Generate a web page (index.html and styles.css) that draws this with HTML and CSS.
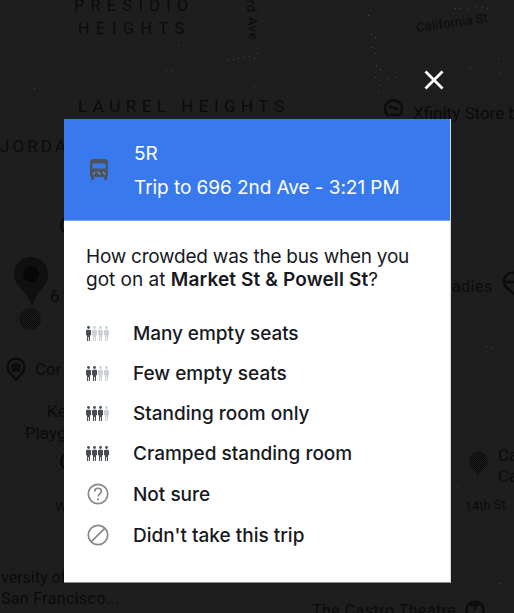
FILE: index.html
```html
<!DOCTYPE html>
<html lang="en">
<head>
<meta charset="utf-8">
<title>Trip feedback</title>
<link rel="stylesheet" href="styles.css">
</head>
<body>
<svg class="map" viewBox="0 0 514 613" aria-hidden="true">
  <defs>
    <pattern id="dots" width="8" height="8" patternUnits="userSpaceOnUse"><path d="M0 1h1v1H0zM4 5h1v1H4z" fill="#0c0c0c"/></pattern>
    <pattern id="dense" width="2" height="2" patternUnits="userSpaceOnUse"><path d="M0 0h1v1H0zM1 1h1v1H1z" fill="#080808"/></pattern>
  </defs>
  <g fill="url(#dots)">
    <path d="M0 385L20 376 62 388 62 410 26 412 0 400zM0 420L30 423 62 440 62 480 0 480z"/>
    <path d="M452 294h52v26l-36 2-6 14h-10zM46 240h18v20H46zM5 310l12 2 3 20-12 5z"/>
    <path d="M400 586h34l-14 14-18-8z"/>
  </g>
  <g class="label">
    <text x="74" y="11" textLength="114" font-size="16">PRESIDIO</text>
    <text x="78" y="34" textLength="106" font-size="16">HEIGHTS</text>
    <text x="78" y="112" textLength="206" font-size="17">LAUREL HEIGHTS</text>
    <text x="0" y="152" textLength="66" font-size="17">JORDA</text>
    <text x="413" y="119" font-size="17">Xfinity Store b</text>
    <text x="50" y="302" font-size="17">6</text>
    <text x="35" y="375" font-size="17">Cor</text>
    <text x="47" y="417" font-size="17">Ke</text>
    <text x="25" y="439" font-size="17">Playg</text>
    <text x="452" y="292" textLength="40" font-size="16">adies</text>
    <text x="498" y="461" font-size="17">Ca</text>
    <text x="498" y="482" font-size="17">Ca</text>
    <text x="465" y="511" font-size="13" transform="rotate(-3 465 511)">14th St</text>
    <text x="1" y="583" font-size="16">versity of</text>
    <text x="1" y="604" textLength="118" font-size="16">San Francisco...</text>
    <text x="312" y="616" textLength="144" font-size="16">The Castro Theatre</text>
    <text x="417" y="32" textLength="72" font-size="13" transform="rotate(-8 417 32)">California St</text>
    <text x="246" y="-8" textLength="48" font-size="13" transform="rotate(86 246 -8)">3rd Ave</text>
    <text x="55" y="511" font-size="13">W</text>
  </g>
  <path d="M32 307C29 292 14 287 14 274a17 17 0 0 1 34 0c0 13-13 18-16 33z" fill="#101010"/>
  <circle cx="31" cy="274" r="8" fill="#070707"/>
  <circle cx="30" cy="319" r="11" fill="url(#dense)"/>
  <g fill="none" stroke="#0c0c0c" stroke-width="2.5">
    <path d="M16 380l-6-7a8.500 8.500 0 1 1 12 0zM11 366h10M12 370h8M13 363v9M16 363v9M19 363v9"/>
    <path d="M389 116a8.500 8.500 0 1 1 9 0M389 108c3-4 7 4 9 0M390 115h8"/>
    <path d="M467 613a8.500 8.500 0 1 1 16 0M471 605h8M475 602v8"/>
    <path d="M514 294l-8-7a8.500 8.500 0 0 1 8-14M504 282h10"/>
    <path d="M64 219a9 9 0 0 0 0 13M64 455a9 9 0 0 0 0 13"/>
  </g>
  <path d="M478 476c-2-6-9-7-9-15a9.500 9.500 0 0 1 19 0c0 8-8 9-10 15z" fill="url(#dense)"/>
  <path d="M178 45h1v1h-1zM166 70h1v1h-1zM171 70h1v1h-1zM34 88h1v1h-1zM228 60h1v1h-1zM233 59h1v1h-1zM238 58h1v1h-1zM244 57h1v1h-1zM249 56h1v1h-1zM254 58h1v1h-1zM257 53h1v1h-1zM254 86h1v1h-1zM368 15h1v1h-1zM371 34h1v1h-1zM375 37h1v1h-1zM372 47h1v1h-1zM375 53h1v1h-1zM376 65h1v1h-1zM380 69h1v1h-1zM375 77h1v1h-1zM387 78h1v1h-1zM395 77h1v1h-1zM379 85h1v1h-1zM378 92h1v1h-1zM455 8h1v1h-1zM460 8h1v1h-1zM467 9h1v1h-1zM476 6h1v1h-1zM482 7h1v1h-1zM487 8h1v1h-1zM470 67h1v1h-1zM498 58h1v1h-1zM500 73h1v1h-1zM486 346h1v1h-1zM491 347h1v1h-1zM457 486h1v1h-1zM500 583h1v1h-1z" fill="#484848"/>
</svg>

<svg width="0" height="0" class="sprite" aria-hidden="true">
  <symbol id="person" viewBox="0 0 5 15">
    <circle cx="2.500" cy="1.500" r="1.400"/>
    <path d="M1.300 3.700h2.400Q5 3.700 5 5v4.200H4V15H2.900v-4h-.8v4H1V9.200H0V5q0-1.300 1.300-1.300z"/>
  </symbol>
</svg>

<main class="dialog">
  <button class="close" aria-label="Close"><svg viewBox="0 0 20 20"><path d="M1.500 1.500l17 17M18.500 1.500l-17 17"/></svg></button>
  <section class="card">
    <header class="trip">
      <svg class="bus" viewBox="0 0 18 21"><path fill-rule="evenodd" d="M3 0h12q3 0 3 3v13q0 1-1 2v2q0 1-1 1h-1q-1 0-1-1v-2H4v2q0 1-1 1H2q-1 0-1-1v-2q-1-1-1-2V3q0-3 3-3zM2.500 4.500v5h13v-5z"/><path class="lamps" d="M3 15.500l2-2.500M15 15.500L13 13M7.500 12.500l3 3"/></svg>
      <div class="trip-text">
        <div class="route">5R</div>
        <div class="destination">Trip to 696 2nd Ave - 3:21 PM</div>
      </div>
    </header>
    <p class="question"><span class="lead">How crowded was the bus when you</span><br>got on at <strong>Market St &amp; Powell St</strong>?</p>
    <ul class="options">
      <li><span class="people one"><svg><use href="#person"/></svg><svg><use href="#person"/></svg><svg><use href="#person"/></svg><svg><use href="#person"/></svg></span><span class="many">Many empty seats</span></li>
      <li><span class="people two"><svg><use href="#person"/></svg><svg><use href="#person"/></svg><svg><use href="#person"/></svg><svg><use href="#person"/></svg></span><span>Few empty seats</span></li>
      <li><span class="people three"><svg><use href="#person"/></svg><svg><use href="#person"/></svg><svg><use href="#person"/></svg><svg><use href="#person"/></svg></span><span>Standing room only</span></li>
      <li><span class="people"><svg><use href="#person"/></svg><svg><use href="#person"/></svg><svg><use href="#person"/></svg><svg><use href="#person"/></svg></span><span>Cramped standing room</span></li>
      <li class="tall"><svg class="round" viewBox="0 0 22 22"><circle cx="11" cy="11" r="9.700"/><path d="M7.700 8.500c0-4.400 6.700-4.200 6.700-.2 0 2.600-3.300 2.700-3.300 5.300M11.100 15.300v2"/></svg><span class="low">Not sure</span></li>
      <li class="tall"><svg class="round" viewBox="0 0 22 22"><circle cx="11" cy="11" r="9.700"/><path d="M4.300 17.700L17.700 4.300"/></svg><span class="low">Didn't take this trip</span></li>
    </ul>
  </section>
</main>
</body>
</html>
```

FILE: styles.css
```css
* { box-sizing: border-box; }
body {
  margin: 0;
  width: 514px;
  height: 613px;
  overflow: hidden;
  background: #1e1e1e;
  color: #17191e;
  font-family: Inter, "Liberation Sans", sans-serif;
}
.map { position: absolute; top: 0; left: 0; width: 514px; height: 613px; }
.sprite { position: absolute; }
.label { fill: #0b0b0b; font-family: Roboto, sans-serif; }
.dialog {
  position: relative;
  width: 387px;
  margin-left: 64px;
  padding-top: 70px;
  display: flex;
  flex-direction: column;
}
.close {
  align-self: flex-end;
  width: 20px;
  height: 20px;
  margin: 0 7px 29px 0;
  padding: 0;
  border: 0;
  background: none;
}
.close svg { display: block; width: 20px; height: 20px; }
.close path { stroke: #fff; stroke-width: 2.700; }
.card { height: 464px; background: #fff; border-right: 1px solid #d9d9d9; border-bottom: 1px solid #858b89; }
.trip {
  display: flex;
  height: 102px;
  padding: 0 0 0 26px;
  background: #387aee;
  border-bottom: 1px solid #78a3ed;
  color: #fff;
}
.bus { width: 18px; height: 21px; margin: 40px 26px 0 0; fill: #4c535d; }
.lamps { fill: none; stroke: #6f8fc8; stroke-width: 1.300; }
.trip-text { padding-top: 18px; font-size: 19px; line-height: 34px; letter-spacing: -0.060px; white-space: nowrap; }
.question { margin: 24px 0 0 22px; font-size: 19px; line-height: 23px; white-space: nowrap; }
.lead { letter-spacing: -0.240px; }
.question strong { font-weight: 600; letter-spacing: 0.130px; }
.options { list-style: none; margin: 22px 0 0; padding: 0 0 0 22px; font-size: 19px; font-weight: 500; white-space: nowrap; }
.options li { display: flex; align-items: center; height: 40px; }
.options li.tall { height: 41px; }
.many { letter-spacing: -0.080px; }
.low { padding-top: 1px; }
.people { display: flex; gap: 1px; width: 47px; color: #474c55; }
.people svg { width: 5px; height: 15px; fill: currentColor; }
.one svg:nth-child(n+2), .two svg:nth-child(n+3), .three svg:nth-child(4) { color: #cdd0d4; }
.round { width: 22px; height: 22px; margin: 0 24px 0 1px; fill: none; stroke: #85888c; stroke-width: 1.700; }
```
